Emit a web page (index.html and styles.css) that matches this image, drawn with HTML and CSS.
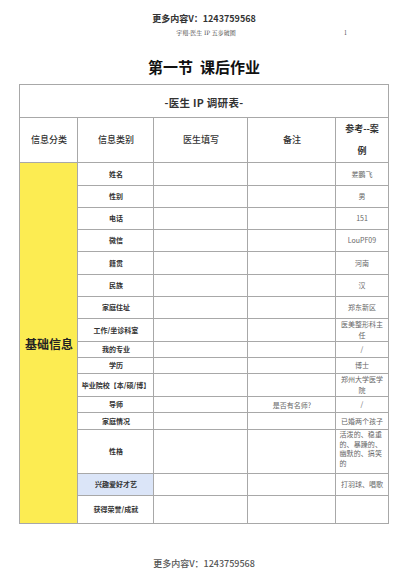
FILE: index.html
```html
<!DOCTYPE html>
<html lang="zh-CN">
<head>
<meta charset="utf-8">
<link rel="stylesheet" href="styles.css">
</head>
<body>
<div class="page">
  <div class="top">
    <div class="wm">更多内容V：1243759568</div>
    <div class="runhead">
      <span class="runtitle">宇翔-医生 IP 五步破圈</span>
      <span class="pnum">1</span>
    </div>
  </div>
  <h1 class="title">第一节&nbsp;&nbsp;课后作业</h1>
  <table class="survey">
    <colgroup>
      <col class="c1"><col class="c2"><col class="c3"><col class="c4"><col class="c5">
    </colgroup>
    <tr class="r33"><td colspan="5" class="caption">-医生 IP 调研表-</td></tr>
    <tr class="r42">
      <th>信息分类</th><th>信息类别</th><th>医生填写</th><th>备注</th><th class="refh">参考--案例</th>
    </tr>
    <tr class="r23"><td rowspan="16" class="cat">基础信息</td><td class="k">姓名</td><td></td><td></td><td class="v">娄鹏飞</td></tr>
    <tr class="r22"><td class="k">性别</td><td></td><td></td><td class="v">男</td></tr>
    <tr class="r22"><td class="k">电话</td><td></td><td></td><td class="v">151</td></tr>
    <tr class="r22"><td class="k">微信</td><td></td><td></td><td class="v">LouPF09</td></tr>
    <tr class="r23"><td class="k">籍贯</td><td></td><td></td><td class="v">河南</td></tr>
    <tr class="r22"><td class="k">民族</td><td></td><td></td><td class="v">汉</td></tr>
    <tr class="r22"><td class="k">家庭住址</td><td></td><td></td><td class="v">郑东新区</td></tr>
    <tr class="r22"><td class="k">工作/坐诊科室</td><td></td><td></td><td class="v">医美整形科主任</td></tr>
    <tr class="r16"><td class="k">我的专业</td><td></td><td></td><td class="v">/</td></tr>
    <tr class="r16"><td class="k">学历</td><td></td><td></td><td class="v">博士</td></tr>
    <tr class="r23"><td class="k">毕业院校【本/硕/博】</td><td></td><td></td><td class="v">郑州大学医学院</td></tr>
    <tr class="r16"><td class="k">导师</td><td></td><td class="note">是否有名师?</td><td class="v">/</td></tr>
    <tr class="r17"><td class="k">家庭情况</td><td></td><td></td><td class="v">已婚两个孩子</td></tr>
    <tr class="r44"><td class="k">性格</td><td></td><td></td><td class="v left">活泼的、稳重的、暴躁的、幽默的、搞笑的</td></tr>
    <tr class="r22"><td class="k blue">兴趣爱好才艺</td><td></td><td></td><td class="v">打羽球、唱歌</td></tr>
    <tr class="r28"><td class="k">获得荣誉/成就</td><td></td><td></td><td class="v"></td></tr>
  </table>
  <div class="foot">更多内容V：1243759568</div>
</div>
</body>
</html>
```

FILE: styles.css
```css
* { box-sizing: border-box; }
html, body { margin: 0; padding: 0; background: #fff; }
body {
  font-family: "Noto Sans CJK SC", "Noto Sans", sans-serif;
  color: #222;
  width: 408px;
  height: 580px;
  overflow: hidden;
}
.page {
  display: flex;
  flex-direction: column;
  align-items: center;
  padding-top: 13px;
}
.top { width: 100%; display: flex; flex-direction: column; align-items: center; }
.wm {
  font-size: 9px;
  line-height: 12px;
  font-weight: 700;
  color: #333;
}
.runhead {
  width: 100%;
  position: relative;
  margin-top: 3px;
  height: 10px;
  display: flex;
  justify-content: center;
  font-family: "Noto Serif CJK SC", "Liberation Serif", serif;
  font-size: 6px;
  line-height: 10px;
  color: #444;
}
.runtitle { margin-left: 4px; }
.pnum { position: absolute; left: 344px; top: 0; }
.title {
  margin: 19px 0 0;
  font-size: 15px;
  line-height: 20px;
  font-weight: 700;
  color: #111;
}
.survey {
  margin-top: 7px;
  width: 368px;
  border-collapse: collapse;
  table-layout: fixed;
  border: 1px solid #a8a8a8;
}
.c1 { width: 58px; }
.c2 { width: 76px; }
.c3 { width: 94px; }
.c4 { width: 88px; }
.c5 { width: 52px; }
.survey td, .survey th {
  border: 1px solid #a8a8a8;
  padding: 0;
  text-align: center;
  vertical-align: middle;
  font-weight: 400;
}
.r16 { height: 16px; }
.r17 { height: 17px; }
.r22 { height: 22px; }
.r23 { height: 23px; }
.r28 { height: 28px; }
.r33 { height: 33px; }
.r42 { height: 42px; }
.r44 { height: 44px; }
.caption {
  font-size: 10.5px;
  font-weight: 700 !important;
  color: #333;
  letter-spacing: 0.3px;
  padding-top: 2px !important;
}
.survey th {
  font-size: 9px;
  line-height: 20px;
  color: #333;
  font-weight: 500;
}
.survey th.refh {
  font-weight: 700;
  padding: 0 5px;
  line-height: 22px;
  word-break: break-all;
}
.cat {
  background: #fcec52;
  font-size: 12px;
  font-weight: 700 !important;
  color: #222;
}
.k {
  font-size: 7px;
  line-height: 9px;
  font-weight: 700 !important;
  color: #333;
}
.blue { background: #dbe5f8; }
.v {
  font-size: 7px;
  line-height: 11px;
  color: #666;
  padding: 0 3px !important;
  word-break: break-all;
}
.v.left {
  text-align: left !important;
  vertical-align: top !important;
  line-height: 9.5px;
  letter-spacing: 0.1px;
}
.note {
  font-size: 7px;
  color: #666;
}
.foot {
  margin-top: 34px;
  font-size: 9px;
  line-height: 12px;
  font-weight: 500;
  color: #555;
}
```
